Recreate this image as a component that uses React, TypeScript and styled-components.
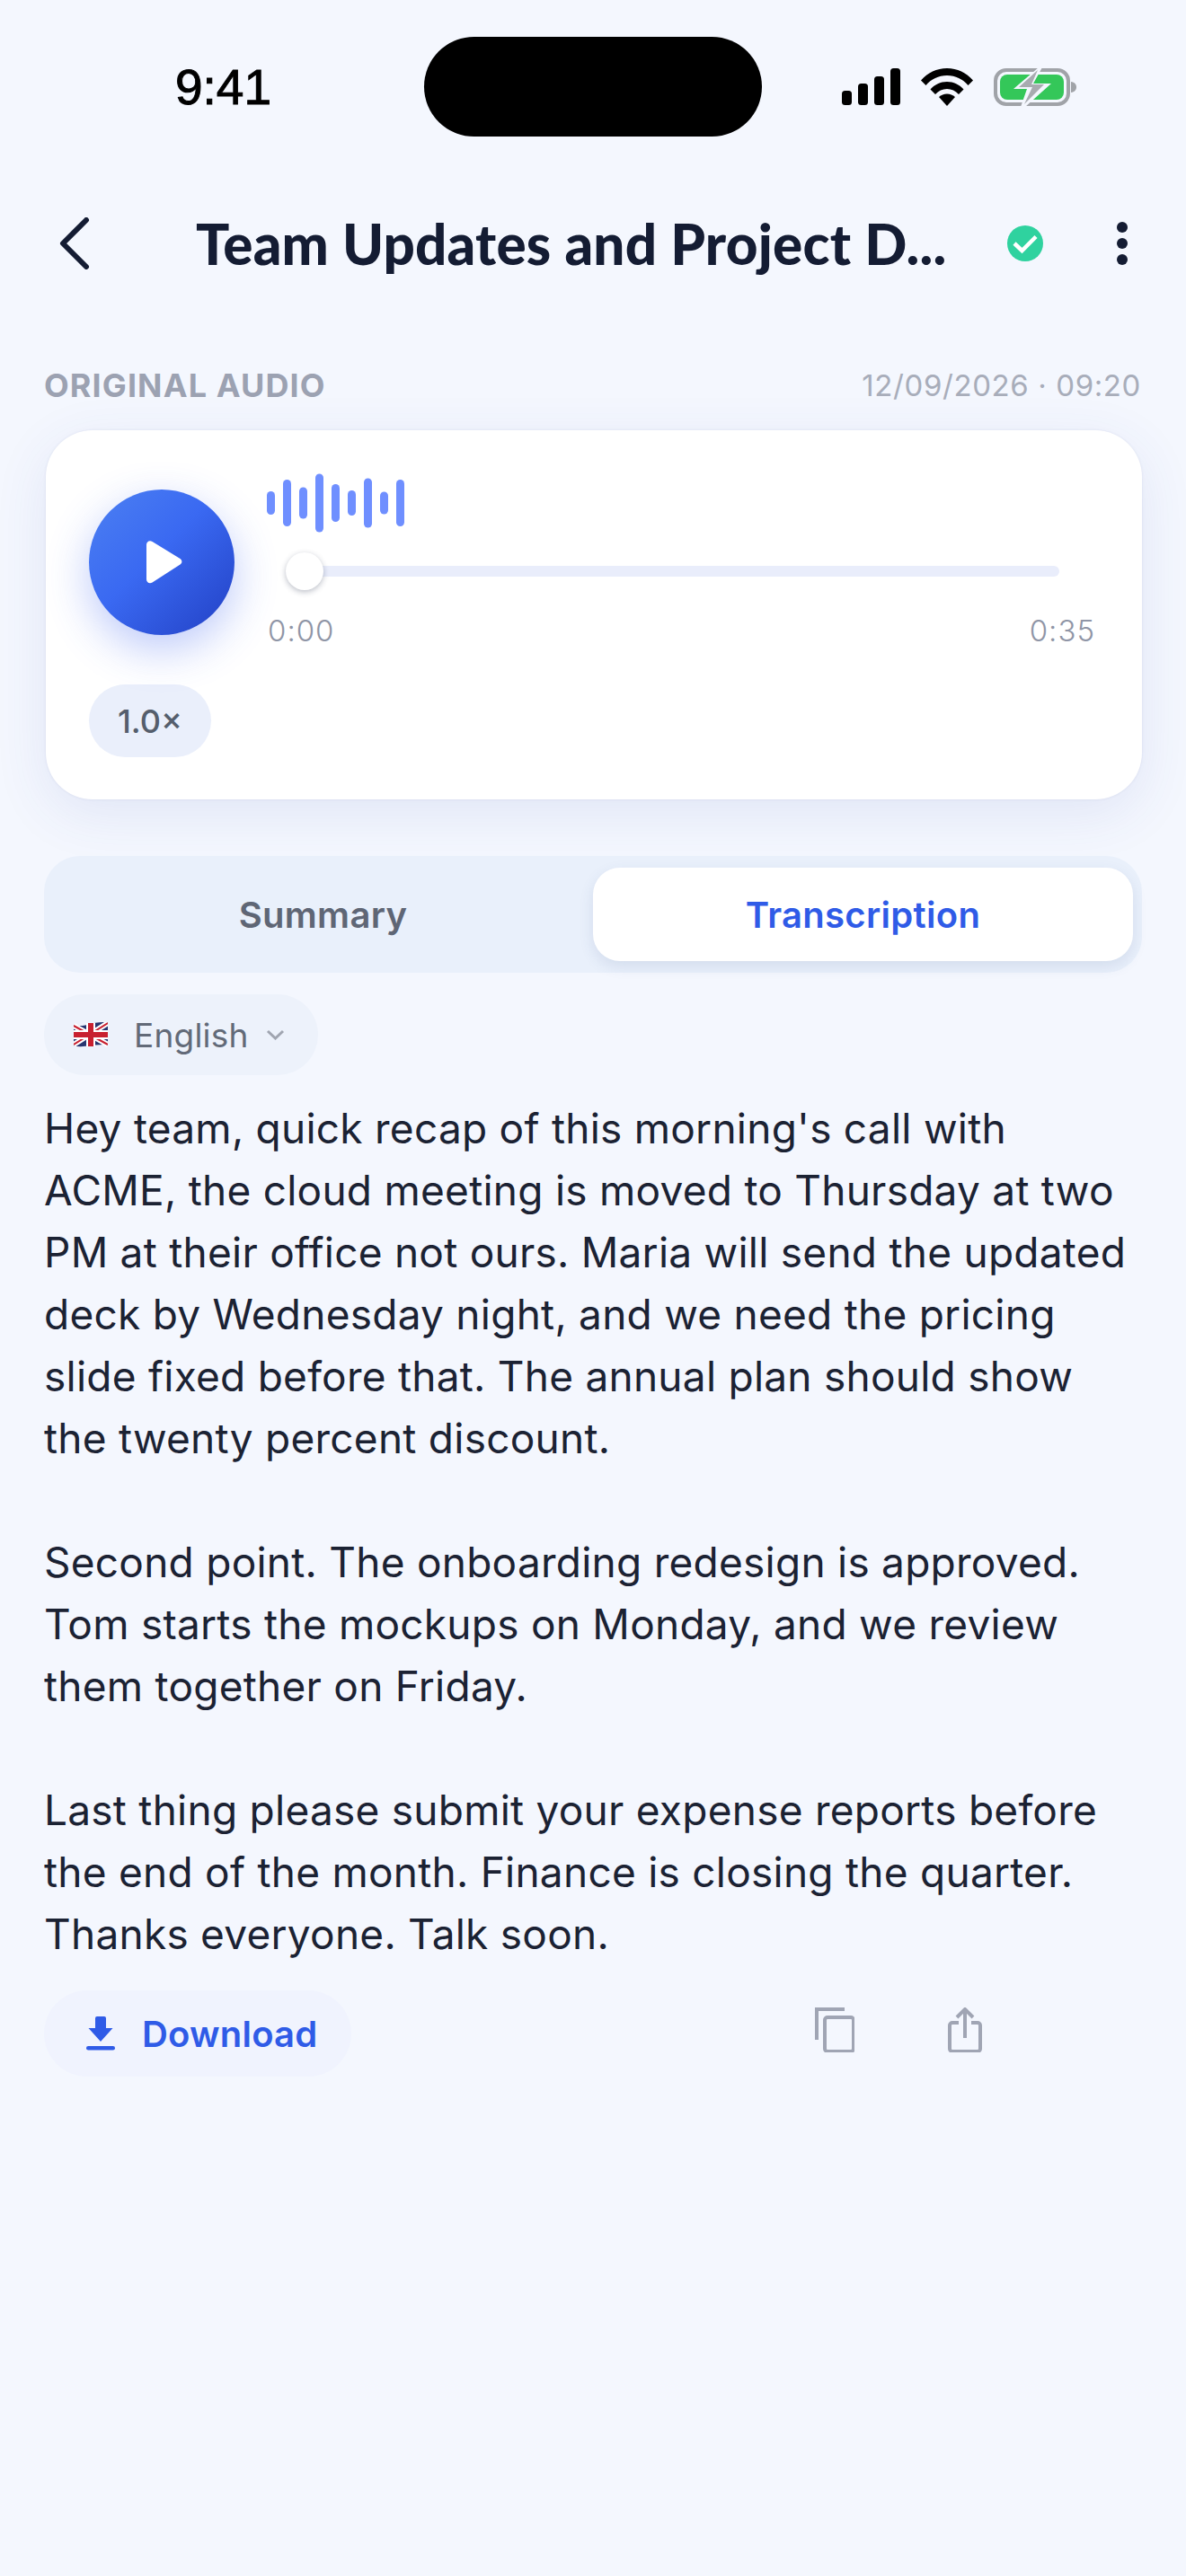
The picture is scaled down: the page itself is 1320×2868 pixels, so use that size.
import React from 'react';
import styled, { createGlobalStyle } from 'styled-components';

const GlobalStyle = createGlobalStyle`
  html, body {
    margin: 0;
    padding: 0;
    background: #f4f7fe;
  }
  * {
    box-sizing: border-box;
  }
`;

const WAVE_HEIGHTS = [26, 52, 35, 65, 42, 28, 55, 25, 52];

function Signal() {
  return (
    <svg width="65" height="41" viewBox="0 0 65 41" fill="#000">
      <rect x="0" y="25" width="11" height="16" rx="3.5" />
      <rect x="18" y="17" width="11" height="24" rx="3.5" />
      <rect x="36" y="9" width="11" height="32" rx="3.5" />
      <rect x="54" y="0" width="11" height="41" rx="3.5" />
    </svg>
  );
}

function Wifi() {
  return (
    <svg width="58" height="42" viewBox="0 0 58 42" fill="#000">
      <path d="M0 13.5C7.5 5 17.5 0 29 0s21.500 5 29 13.500l-5.500 5.500C46.500 12 38.500 8 29 8S11.500 12 5.500 19z" />
      <path d="M10.500 23.500C15.500 18 21.500 15 29 15s13.500 3 18.500 8.500L42 29c-3.500-3.800-8-6-13-6s-9.500 2.200-13 6z" />
      <path d="M20 32c2.500-2.300 5.500-3.500 9-3.500s6.500 1.200 9 3.500L29 42z" />
    </svg>
  );
}

function Battery() {
  return (
    <svg width="93" height="44" viewBox="0 0 93 44">
      <rect x="2" y="3" width="81" height="38" rx="12" fill="none" stroke="#a0a3a8" strokeWidth="4" />
      <rect x="7" y="8" width="71" height="28" rx="8" fill="#34c759" />
      <path d="M86 16c4 .5 6 3 6 6s-2 5.500-6 6z" fill="#a0a3a8" />
      <path d="M50 0 22 24h15l-7 20h5l29-26H44l10-18z" fill="#f4f7fe" />
      <path d="M49 3 28 22h15l-9 19 22-22H42z" fill="#a8abb0" />
    </svg>
  );
}

function BackIcon() {
  return (
    <svg width="34" height="58" viewBox="0 0 34 58" fill="none">
      <path d="M30 3 4 29l26 26" stroke="#141c33" strokeWidth="6" strokeLinecap="round" strokeLinejoin="round" />
    </svg>
  );
}

function CheckBadge() {
  return (
    <svg width="40" height="40" viewBox="0 0 40 40">
      <circle cx="20" cy="20" r="20" fill="#2fd29f" />
      <path d="M8 20l8.500 8L32 12.500" fill="none" stroke="#fff" strokeWidth="4.500" />
    </svg>
  );
}

function Waveform() {
  return (
    <svg width="153" height="66" viewBox="0 0 153 66">
      {WAVE_HEIGHTS.map((h, i) => (
        <rect key={i} x={i * 18} y={33 - h / 2} width="9" height={h} rx="4.500" fill="#6f8fff" />
      ))}
    </svg>
  );
}

function FlagUK() {
  return (
    <svg width="38" height="28" viewBox="0 0 38 28">
      <path d="M0 3c6 2 12 1 19-1s13-2 19-2v25c-6 0-12 0-19 1S6 28 0 26z" fill="#27356f" />
      <path d="M0 4l38 21M38 1 0 25" stroke="#fff" strokeWidth="6" />
      <path d="M0 4l38 21M38 1 0 25" stroke="#c8202f" strokeWidth="2" />
      <path d="M19 1v26M0 14h38" stroke="#fff" strokeWidth="10" />
      <path d="M19 1v26M0 14h38" stroke="#c8202f" strokeWidth="6" />
    </svg>
  );
}

function Chevron() {
  return (
    <svg width="21" height="12" viewBox="0 0 21 12" fill="none">
      <path d="M2 2l8.500 8L19 2" stroke="#a0a5b0" strokeWidth="3" />
    </svg>
  );
}

function DownloadIcon() {
  return (
    <svg width="32" height="38" viewBox="0 0 32 38" fill="#2f5be7">
      <path d="M10 2a2 2 0 0 1 2-2h8a2 2 0 0 1 2 2v11h7.500L16 28 2.500 13H10z" />
      <rect x="0" y="33" width="32" height="4.500" rx="2.250" />
    </svg>
  );
}

function CopyIcon() {
  return (
    <svg width="44" height="50" viewBox="0 0 44 50" fill="none" stroke="#a0a5b4" strokeWidth="4">
      <path d="M2 36V2h31" />
      <rect x="11" y="11" width="32" height="38" rx="3" />
    </svg>
  );
}

function ShareIcon() {
  return (
    <svg width="38" height="50" viewBox="0 0 38 50" fill="none" stroke="#a0a5b4" strokeWidth="4">
      <path d="M12 17H5a3 3 0 0 0-3 3v26a3 3 0 0 0 3 3h28a3 3 0 0 0 3-3V20a3 3 0 0 0-3-3h-7" />
      <path d="M19 34V3M10 11l9-9 9 9" />
    </svg>
  );
}

export default function App() {
  return (
    <Screen>
      <GlobalStyle />
      <StatusBar>
        <Clock>9:41</Clock>
        <Island />
        <StatusIcons>
          <Signal />
          <Wifi />
          <Battery />
        </StatusIcons>
      </StatusBar>

      <Header>
        <BackIcon />
        <Title>Team Updates and Project D...</Title>
        <CheckBadge />
        <MenuDots>
          <i />
          <i />
          <i />
        </MenuDots>
      </Header>

      <Content>
        <MetaRow>
          <SectionLabel>ORIGINAL AUDIO</SectionLabel>
          <DateText>12/09/2026 · 09:20</DateText>
        </MetaRow>

        <PlayerCard>
          <PlayerTop>
            <PlayButton>
              <svg width="40" height="48" viewBox="0 0 40 48">
                <path d="M0 4.500C0 1 3.500-1 6.500 1l31 19c2.500 1.700 2.500 5 0 6.500L6.500 46.500C3.500 48.500 0 46.500 0 43z" fill="#fff" />
              </svg>
            </PlayButton>
            <PlayerMain>
              <Waveform />
              <Track>
                <Thumb />
              </Track>
              <Times>
                <span>0:00</span>
                <span>0:35</span>
              </Times>
            </PlayerMain>
          </PlayerTop>
          <SpeedPill>1.0×</SpeedPill>
        </PlayerCard>

        <Tabs>
          <Tab>Summary</Tab>
          <Tab $active>Transcription</Tab>
        </Tabs>

        <LangPill>
          <FlagUK />
          <LangName>English</LangName>
          <Chevron />
        </LangPill>

        <Transcript>
          <p>
            Hey team, quick recap of this morning's call with ACME, the cloud meeting is moved to Thursday at two PM at
            their office not ours. Maria will send the updated deck by Wednesday night, and we need the pricing slide
            fixed before that. The annual plan should show the twenty percent discount.
          </p>
          <p>
            Second point. The onboarding redesign is approved. Tom starts the mockups on Monday, and we review them
            together on Friday.
          </p>
          <p>
            Last thing please submit your expense reports before the end of the month. Finance is closing the quarter.
            Thanks everyone. Talk soon.
          </p>
        </Transcript>

        <Actions>
          <DownloadButton>
            <DownloadIcon />
            Download
          </DownloadButton>
          <IconGroup>
            <CopyIcon />
            <ShareIcon />
          </IconGroup>
        </Actions>
      </Content>
    </Screen>
  );
}

const Screen = styled.div`
  width: 1320px;
  height: 2868px;
  background: #f4f7fe;
  overflow: hidden;
  font-family: Inter, sans-serif;
`;

const StatusBar = styled.div`
  display: grid;
  grid-template-columns: 472px 376px 1fr;
  align-items: center;
  padding-top: 41px;
`;

const Clock = styled.div`
  padding-left: 195px;
  font-family: 'Liberation Sans', sans-serif;
  font-size: 55px;
  font-weight: 400;
  line-height: 60px;
  color: #000;
  -webkit-text-stroke: 1px #000;
`;

const Island = styled.div`
  height: 111px;
  border-radius: 56px;
  background: #000;
`;

const StatusIcons = styled.div`
  display: flex;
  align-items: center;
  gap: 23px;
  padding-left: 89px;
`;

const Header = styled.div`
  display: flex;
  align-items: center;
  height: 120px;
  margin-top: 59px;
  padding-left: 66px;
`;

const Title = styled.div`
  width: 903px;
  margin-left: 118px;
  font-family: Lato, sans-serif;
  font-size: 62px;
  font-weight: 900;
  letter-spacing: 0.2px;
  color: #141c33;
  white-space: nowrap;
`;

const MenuDots = styled.div`
  display: flex;
  flex-direction: column;
  gap: 6px;
  margin-left: 82px;

  i {
    display: block;
    width: 12px;
    height: 12px;
    border-radius: 50%;
    background: #141c33;
  }
`;

const Content = styled.div`
  padding: 0 50px 0 49px;
`;

const MetaRow = styled.div`
  display: flex;
  justify-content: space-between;
  align-items: center;
  height: 44px;
  margin-top: 76px;
`;

const SectionLabel = styled.div`
  font-size: 36px;
  font-weight: 700;
  letter-spacing: 1.1px;
  color: #9ca2b2;
`;

const DateText = styled.div`
  font-size: 33px;
  letter-spacing: 0.6px;
  color: #a8adba;
`;

const PlayerCard = styled.div`
  width: 1220px;
  height: 411px;
  margin-top: 28px;
  margin-left: 2px;
  padding: 48px 52px 48px 48px;
  background: #fff;
  border-radius: 52px;
  box-shadow: 0 0 3px rgba(60, 70, 130, 0.1), 0 16px 60px rgba(60, 80, 180, 0.1);
`;

const PlayerTop = styled.div`
  display: flex;
  gap: 36px;
`;

const PlayButton = styled.div`
  display: flex;
  flex: none;
  align-items: center;
  justify-content: center;
  width: 162px;
  height: 162px;
  margin-top: 18px;
  padding-left: 6px;
  border-radius: 50%;
  background: linear-gradient(135deg, #4c80f2 0%, #3a69f2 45%, #2240c4 100%);
  box-shadow: 0 16px 48px rgba(50, 90, 240, 0.32);
`;

const PlayerMain = styled.div`
  flex: 1;
  min-width: 0;
`;

const Track = styled.div`
  position: relative;
  width: 861px;
  height: 12px;
  margin: 33px 0 0 21px;
  border-radius: 6px;
  background: #e9edfb;
`;

const Thumb = styled.div`
  position: absolute;
  left: 0;
  top: -15px;
  width: 42px;
  height: 42px;
  border-radius: 50%;
  background: #fff;
  box-shadow: 0 2px 6px rgba(30, 40, 70, 0.3);
`;

const Times = styled.div`
  display: flex;
  justify-content: space-between;
  margin-top: 40px;
  padding-left: 1px;
  font-size: 33px;
  font-weight: 300;
  line-height: 40px;
  letter-spacing: 1px;
  color: #8f95a6;
`;

const SpeedPill = styled.div`
  display: flex;
  align-items: center;
  justify-content: center;
  width: 136px;
  height: 81px;
  margin-top: 40px;
  border-radius: 41px;
  background: #eaeffb;
  font-size: 36px;
  font-weight: 500;
  color: #555e6c;
`;

const Tabs = styled.div`
  display: grid;
  grid-template-columns: 1fr 1fr;
  width: 1222px;
  height: 130px;
  margin-top: 63px;
  padding: 13px 10px;
  border-radius: 40px;
  background: #e9f0fb;
`;

const Tab = styled.div<{ $active?: boolean }>`
  display: flex;
  align-items: center;
  justify-content: center;
  border-radius: 30px;
  font-size: 40px;
  font-weight: 600;
  letter-spacing: 0.3px;
  color: ${(p) => (p.$active ? '#2f5be7' : '#5f6675')};
  background: ${(p) => (p.$active ? '#fff' : 'transparent')};
  box-shadow: ${(p) => (p.$active ? '0 6px 16px rgba(60, 80, 140, 0.12)' : 'none')};
`;

const LangPill = styled.div`
  display: inline-flex;
  align-items: center;
  width: 305px;
  height: 90px;
  margin-top: 24px;
  padding-left: 33px;
  border-radius: 45px;
  background: #edf2fb;
`;

const LangName = styled.span`
  margin: 0 19px 0 29px;
  font-size: 37px;
  letter-spacing: 0.2px;
  color: #626a78;
`;

const Transcript = styled.div`
  width: 1222px;
  margin-top: 25px;
  font-size: 46px;
  line-height: 69px;
  letter-spacing: 0.25px;
  color: #1b2233;

  p {
    margin: 0 0 69px;
  }

  p:last-child {
    margin-bottom: 0;
  }
`;

const Actions = styled.div`
  display: flex;
  align-items: center;
  margin-top: 28px;
`;

const DownloadButton = styled.div`
  display: flex;
  align-items: center;
  gap: 30px;
  width: 342px;
  height: 96px;
  padding-left: 47px;
  border-radius: 48px;
  background: #f0f3fe;
  font-size: 40px;
  font-weight: 600;
  letter-spacing: 0.2px;
  color: #2f5be7;
`;

const IconGroup = styled.div`
  display: flex;
  align-items: center;
  gap: 104px;
  margin: -8px 0 0 516px;
`;
